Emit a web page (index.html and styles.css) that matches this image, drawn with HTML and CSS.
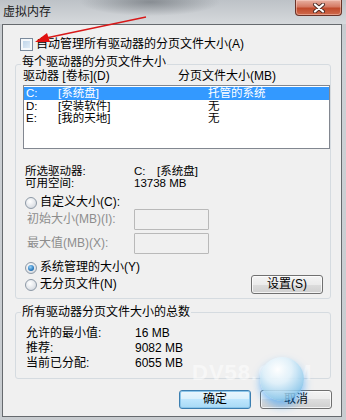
FILE: index.html
```html
<!DOCTYPE html>
<html>
  <head>
    <meta charset="UTF-8">
    <title>虚拟内存</title>
    <link rel="stylesheet" href="styles.css">
  </head>
  <body>
    <div class="window">
      <div class="titlebar">
        <span class="title">虚拟内存</span>
        <button type="button" class="close">
          <svg width="14" height="10" viewBox="0 0 14 10">
            <path d="M3 1.5 L11 8.5 M11 1.5 L3 8.5" stroke="#4a2a24" stroke-width="4" stroke-linecap="round"/>
            <path d="M3 1.5 L11 8.5 M11 1.5 L3 8.5" stroke="#ffffff" stroke-width="2.2" stroke-linecap="round"/>
          </svg>
        </button>
      </div>

      <div class="client">
        <div class="check-row">
          <span class="checkbox"></span>
          <span>自动管理所有驱动器的分页文件大小(A)</span>
        </div>

        <div class="group group-drives">
          <div class="group-title">每个驱动器的分页文件大小</div>
          <div class="list-head">
            <span class="col-drive">驱动器 [卷标](D)</span>
            <span>分页文件大小(MB)</span>
          </div>
          <div class="listbox">
            <div class="list-row selected">
              <span class="col-letter">C:</span><span class="col-vol">[系统盘]</span><span>托管的系统</span>
            </div>
            <div class="list-row">
              <span class="col-letter">D:</span><span class="col-vol">[安装软件]</span><span>无</span>
            </div>
            <div class="list-row">
              <span class="col-letter">E:</span><span class="col-vol">[我的天地]</span><span>无</span>
            </div>
          </div>

          <div class="info-row first">
            <span class="info-label">所选驱动器:</span>
            <span class="drive-letter">C:</span><span>[系统盘]</span>
          </div>
          <div class="info-row">
            <span class="info-label">可用空间:</span>
            <span>13738 MB</span>
          </div>

          <div class="radio-row custom">
            <span class="radio"></span>
            <span>自定义大小(C):</span>
          </div>
          <div class="size-row">
            <span class="size-label">初始大小(MB)(I):</span>
            <span class="textbox"></span>
          </div>
          <div class="size-row">
            <span class="size-label">最大值(MB)(X):</span>
            <span class="textbox"></span>
          </div>

          <div class="radio-row managed">
            <span class="radio checked"></span>
            <span>系统管理的大小(Y)</span>
          </div>
          <div class="radio-row nopage">
            <span class="radio"></span>
            <span class="grow">无分页文件(N)</span>
            <button type="button" class="btn">设置(S)</button>
          </div>
        </div>

        <div class="group group-total">
          <div class="group-title">所有驱动器分页文件大小的总数</div>
          <div class="total-row first">
            <span class="total-label">允许的最小值:</span><span>16 MB</span>
          </div>
          <div class="total-row">
            <span class="total-label">推荐:</span><span>9082 MB</span>
          </div>
          <div class="total-row">
            <span class="total-label">当前已分配:</span><span>6055 MB</span>
          </div>
        </div>

        <div class="button-row">
          <button type="button" class="btn btn-default">确定</button>
          <button type="button" class="btn">取消</button>
        </div>
      </div>

      <div class="watermark">DV58.COM</div>
      <div class="bubble"></div>

      <svg class="arrow" width="346" height="60" viewBox="0 0 346 60">
        <path d="M146 17 L46 38" stroke="#d81818" stroke-width="1.4" fill="none"/>
        <path d="M35 42 L47 33 L50 42 Z" fill="#e01010"/>
      </svg>
    </div>
  </body>
</html>
```

FILE: styles.css
```css
* {
  box-sizing: border-box;
}
body {
  margin: 0;
  font-family: "Liberation Sans", "Noto Sans CJK SC", sans-serif;
  font-size: 12px;
  color: #000;
}
.window {
  position: relative;
  width: 346px;
  height: 420px;
  overflow: hidden;
  background: linear-gradient(#c4c8cc, #cdd1d5 60px, #c8ccd0);
}
.titlebar {
  height: 24px;
  display: flex;
  justify-content: space-between;
  align-items: flex-start;
  background:
    radial-gradient(ellipse 70px 14px at 150px 2px, rgba(80, 86, 92, 0.5), rgba(80, 86, 92, 0)),
    linear-gradient(#bdc2c7, #d6d9dc);
}
.title {
  padding: 4px 0 0 3px;
  line-height: 16px;
  color: #1a1a1a;
}
.close {
  width: 47px;
  height: 16px;
  margin-right: 4px;
  padding: 0;
  display: flex;
  align-items: center;
  justify-content: center;
  border: 1px solid #6a3328;
  border-top: none;
  border-radius: 0 0 4px 4px;
  background: linear-gradient(#e8b1a3, #d57a64 45%, #c04a2c 55%, #cf6a4c);
  box-shadow: inset 0 0 0 1px rgba(255, 220, 210, 0.45);
}

.client {
  height: 393px;
  margin: 0 4px 0 2px;
  border: 1px solid #666a6e;
  background: #f0f0f0;
}

.check-row {
  height: 13px;
  margin-top: 13px;
  padding-left: 17px;
  display: flex;
  align-items: center;
  gap: 3px;
  line-height: 13px;
}
.checkbox {
  width: 13px;
  height: 13px;
  border: 1px solid #7a8a9c;
  background: linear-gradient(135deg, #b6cfe6, #e9f2fa);
  box-shadow: inset 0 0 0 2px #f4f8fb;
}

.group {
  margin: 13px 10px 0 12px;
  border: 1px solid #d5dbe0;
  border-radius: 3px;
}
.group-title {
  width: fit-content;
  height: 12px;
  margin: -9px 0 0 5px;
  padding: 0 1px;
  line-height: 12px;
  background: #f0f0f0;
}
.group-total .group-title {
  margin-top: -7px;
}

.list-head {
  height: 12px;
  margin: 2px 0 0 7px;
  line-height: 12px;
  display: flex;
}
.col-drive {
  width: 155px;
}
.listbox {
  height: 64px;
  margin: 3px 0 0 7px;
  padding-top: 1px;
  border: 1px solid #828790;
  background: #fff;
  font-size: 11.5px;
}
.list-row {
  height: 12.5px;
  line-height: 12.5px;
  padding-left: 2px;
  display: flex;
}
.list-row.selected {
  background: #3399ff;
  color: #fff;
}
.col-letter {
  width: 32px;
}
.col-vol {
  width: 150px;
}

.info-row {
  height: 12px;
  line-height: 12px;
  padding-left: 9px;
  display: flex;
  font-size: 11.5px;
}
.info-row.first {
  margin-top: 16px;
}
.info-label {
  width: 109px;
}
.drive-letter {
  width: 23px;
}

.radio-row {
  height: 13px;
  padding-left: 9px;
  display: flex;
  align-items: center;
  gap: 3px;
  line-height: 13px;
}
.radio-row.custom {
  margin-top: 7px;
}
.radio-row.managed {
  margin-top: 7px;
}
.radio-row.nopage {
  height: 19px;
  margin-top: 1px;
  padding-right: 7px;
}
.grow {
  flex: 1;
}
.radio {
  width: 12px;
  height: 12px;
  border: 1px solid #8d99a6;
  border-radius: 50%;
  background: radial-gradient(circle at 40% 35%, #ffffff, #e3e6ea 55%, #c8ced5);
  display: flex;
  align-items: center;
  justify-content: center;
}
.radio.checked::after {
  content: "";
  width: 6px;
  height: 6px;
  border-radius: 50%;
  background: radial-gradient(circle at 40% 35%, #9ad3f7, #2c7cc0 60%, #164b7c);
}

.size-row {
  height: 21px;
  padding-left: 11px;
  display: flex;
  align-items: center;
  line-height: 13px;
  color: #8d8d8d;
}
.size-row + .size-row {
  margin-top: 3px;
}
.size-label {
  width: 107px;
}
.textbox {
  width: 75px;
  height: 21px;
  border: 1px solid #b9b9b9;
  border-radius: 1px;
  background: #f0f0f0;
}

.btn {
  width: 72px;
  height: 19px;
  padding: 0;
  border: 1px solid #707070;
  border-radius: 3px;
  font: inherit;
  line-height: 17px;
  color: #000;
  background: linear-gradient(#f4f4f4 0%, #ebebeb 50%, #dddddd 50%, #cfcfcf 100%);
  box-shadow: inset 0 0 0 1px rgba(255, 255, 255, 0.75);
}
.btn-default {
  border-color: #3c7fb1;
  background: linear-gradient(#eaf6fd 0%, #d9f0fc 50%, #bee6fd 50%, #a7d9f5 100%);
  box-shadow: inset 0 0 0 1px #8cc6ea;
}

.group-drives {
  padding-bottom: 4px;
}
.group-total {
  padding-bottom: 7px;
}
.total-row {
  height: 15px;
  line-height: 15px;
  padding-left: 10px;
  display: flex;
}
.total-row.first {
  margin-top: 8px;
}
.total-label {
  width: 109px;
}

.button-row {
  margin: 11px 9px 0 0;
  display: flex;
  justify-content: flex-end;
  gap: 9px;
}

.watermark {
  position: absolute;
  left: 192px;
  top: 360px;
  font-family: "Liberation Sans", sans-serif;
  font-size: 22px;
  font-weight: bold;
  letter-spacing: 1px;
  color: rgba(255, 255, 255, 0.5);
}
.bubble {
  position: absolute;
  left: 260px;
  top: 357px;
  width: 44px;
  height: 44px;
  border-radius: 50%;
  background: radial-gradient(circle at 40% 28%, rgba(255, 255, 255, 0.95) 0%, rgba(222, 240, 250, 0.9) 35%, rgba(140, 200, 236, 0.85) 70%, rgba(40, 140, 225, 0.9) 100%);
  box-shadow: 0 5px 9px rgba(30, 150, 255, 0.55);
}
.arrow {
  position: absolute;
  left: 0;
  top: 0;
}
```
